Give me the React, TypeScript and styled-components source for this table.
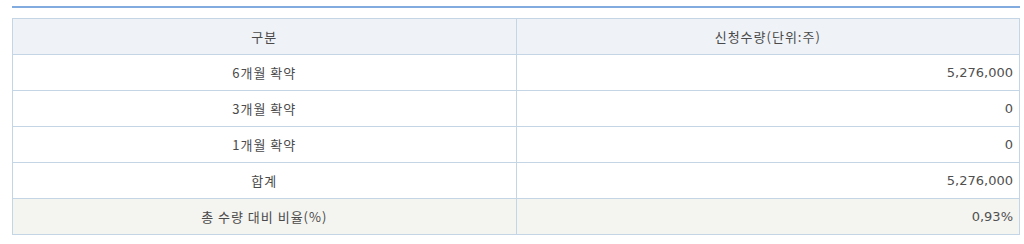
import styled, { createGlobalStyle } from "styled-components";

const GlobalStyle = createGlobalStyle`
  html, body {
    margin: 0;
    padding: 0;
    background: #ffffff;
  }
  body {
    font-family: "Noto Sans CJK KR", "Noto Sans", sans-serif;
  }
`;

const Styled_Container = styled.div`
  padding: 6px 4px 0 12px;
`;

const Styled_TopLine = styled.div`
  height: 2px;
  background-color: #82abdf;
  margin-bottom: 10px;
`;

const Styled_Table = styled.table`
  width: 100%;
  border-collapse: collapse;
  table-layout: fixed;
  border: 1px solid #c4d5e5;
  color: #4a4a4a;
  font-size: 13px;
  letter-spacing: 1px;
`;

const Styled_Row = styled.tr<{ $tone?: "head" | "sum" }>`
  height: 36px;
  background-color: ${({ $tone }) =>
    $tone === "head" ? "#eff3f7" : $tone === "sum" ? "#f4f4f0" : "#ffffff"};
`;

const Styled_Cell = styled.td`
  border: 1px solid #c4d5e5;
  padding: 0 5px;
  text-align: center;
  vertical-align: middle;
  line-height: 16px;
  white-space: nowrap;
`;

const Styled_NumberCell = styled(Styled_Cell)`
  padding: 0 6px 0 5px;
  text-align: right;
  font-family: "DejaVu Sans", "Noto Sans", sans-serif;
  font-size: 13px;
  letter-spacing: 0;
  color: #505050;
`;

const Styled_HeadCell = styled(Styled_Cell).attrs({ as: "th" })`
  font-weight: normal;
`;

const rows = [
  { label: "6개월 확약", value: "5,276,000" },
  { label: "3개월 확약", value: "0" },
  { label: "1개월 확약", value: "0" },
  { label: "합계", value: "5,276,000" }
];

export default function App(): JSX.Element {
  return (
    <Styled_Container>
      <GlobalStyle />
      <Styled_TopLine />
      <Styled_Table>
        <colgroup>
          <col style={{ width: "50%" }} />
          <col style={{ width: "50%" }} />
        </colgroup>
        <thead>
          <Styled_Row $tone="head">
            <Styled_HeadCell>구분</Styled_HeadCell>
            <Styled_HeadCell>신청수량(단위:주)</Styled_HeadCell>
          </Styled_Row>
        </thead>
        <tbody>
          {rows.map((row) => (
            <Styled_Row key={row.label}>
              <Styled_Cell>{row.label}</Styled_Cell>
              <Styled_NumberCell>{row.value}</Styled_NumberCell>
            </Styled_Row>
          ))}
          <Styled_Row $tone="sum">
            <Styled_Cell>총 수량 대비 비율(%)</Styled_Cell>
            <Styled_NumberCell>0,93%</Styled_NumberCell>
          </Styled_Row>
        </tbody>
      </Styled_Table>
    </Styled_Container>
  );
}
